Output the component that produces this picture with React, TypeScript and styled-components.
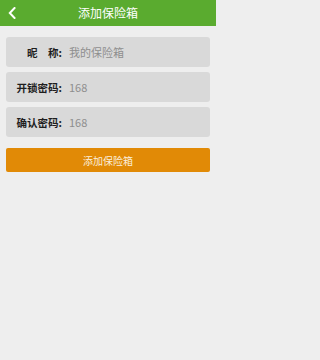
import React from "react";
import styled, { createGlobalStyle } from "styled-components";

const Global = createGlobalStyle`
  html, body { margin: 0; padding: 0; background: #eeeeee; }
  body { font-family: "Noto Sans CJK SC", "Noto Sans", sans-serif; }
  * { box-sizing: border-box; }
`;

const Page = styled.div`
  width: 216px;
  height: 360px;
  background: #eeeeee;
  display: flex;
  flex-direction: column;
`;

const Header = styled.header`
  height: 26px;
  background: #5aab2f;
  display: flex;
  align-items: center;
  justify-content: center;
  position: relative;
`;

const BackButton = styled.button`
  position: absolute;
  left: 5px;
  top: 5px;
  width: 14px;
  height: 16px;
  padding: 0;
  border: 0;
  background: none;
  display: flex;
  align-items: center;
  justify-content: center;
`;

const Title = styled.h1`
  margin: 0;
  font-size: 12px;
  font-weight: 400;
  color: #ffffff;
  line-height: 1;
`;

const Form = styled.div`
  display: flex;
  flex-direction: column;
  gap: 5px;
  padding: 11px 6px 0;
`;

const Field = styled.div`
  height: 30px;
  background: #d9d9d9;
  border-radius: 3px;
  display: grid;
  grid-template-columns: 56px 1fr;
  column-gap: 7px;
  align-items: center;
`;

const Label = styled.span`
  font-size: 10.5px;
  color: #1e1e1e;
  font-weight: 600;
  text-align: right;
  white-space: pre;
`;

const Value = styled.span`
  font-size: 11px;
  color: #8e8e8e;
`;

const SubmitButton = styled.button`
  margin-top: 6px;
  height: 24px;
  border: 0;
  border-radius: 2px;
  background: #e18a06;
  color: #fbeedb;
  font-family: "Noto Sans CJK SC", "Noto Sans", sans-serif;
  font-size: 10px;
  padding: 0;
`;

const fields = [
  { label: "昵\u3000称:", value: "我的保险箱" },
  { label: "开锁密码:", value: "168" },
  { label: "确认密码:", value: "168" },
];

export default function App() {
  return (
    <Page>
      <Global />
      <Header>
        <BackButton aria-label="back">
          <svg width="8" height="12" viewBox="0 0 8 12">
            <path d="M6.5 1 L1.8 6 L6.5 11" fill="none" stroke="#ffffff" strokeWidth="2" strokeLinecap="square" />
          </svg>
        </BackButton>
        <Title>添加保险箱</Title>
      </Header>
      <Form>
        {fields.map((f) => (
          <Field key={f.label}>
            <Label>{f.label}</Label>
            <Value>{f.value}</Value>
          </Field>
        ))}
        <SubmitButton>添加保险箱</SubmitButton>
      </Form>
    </Page>
  );
}
